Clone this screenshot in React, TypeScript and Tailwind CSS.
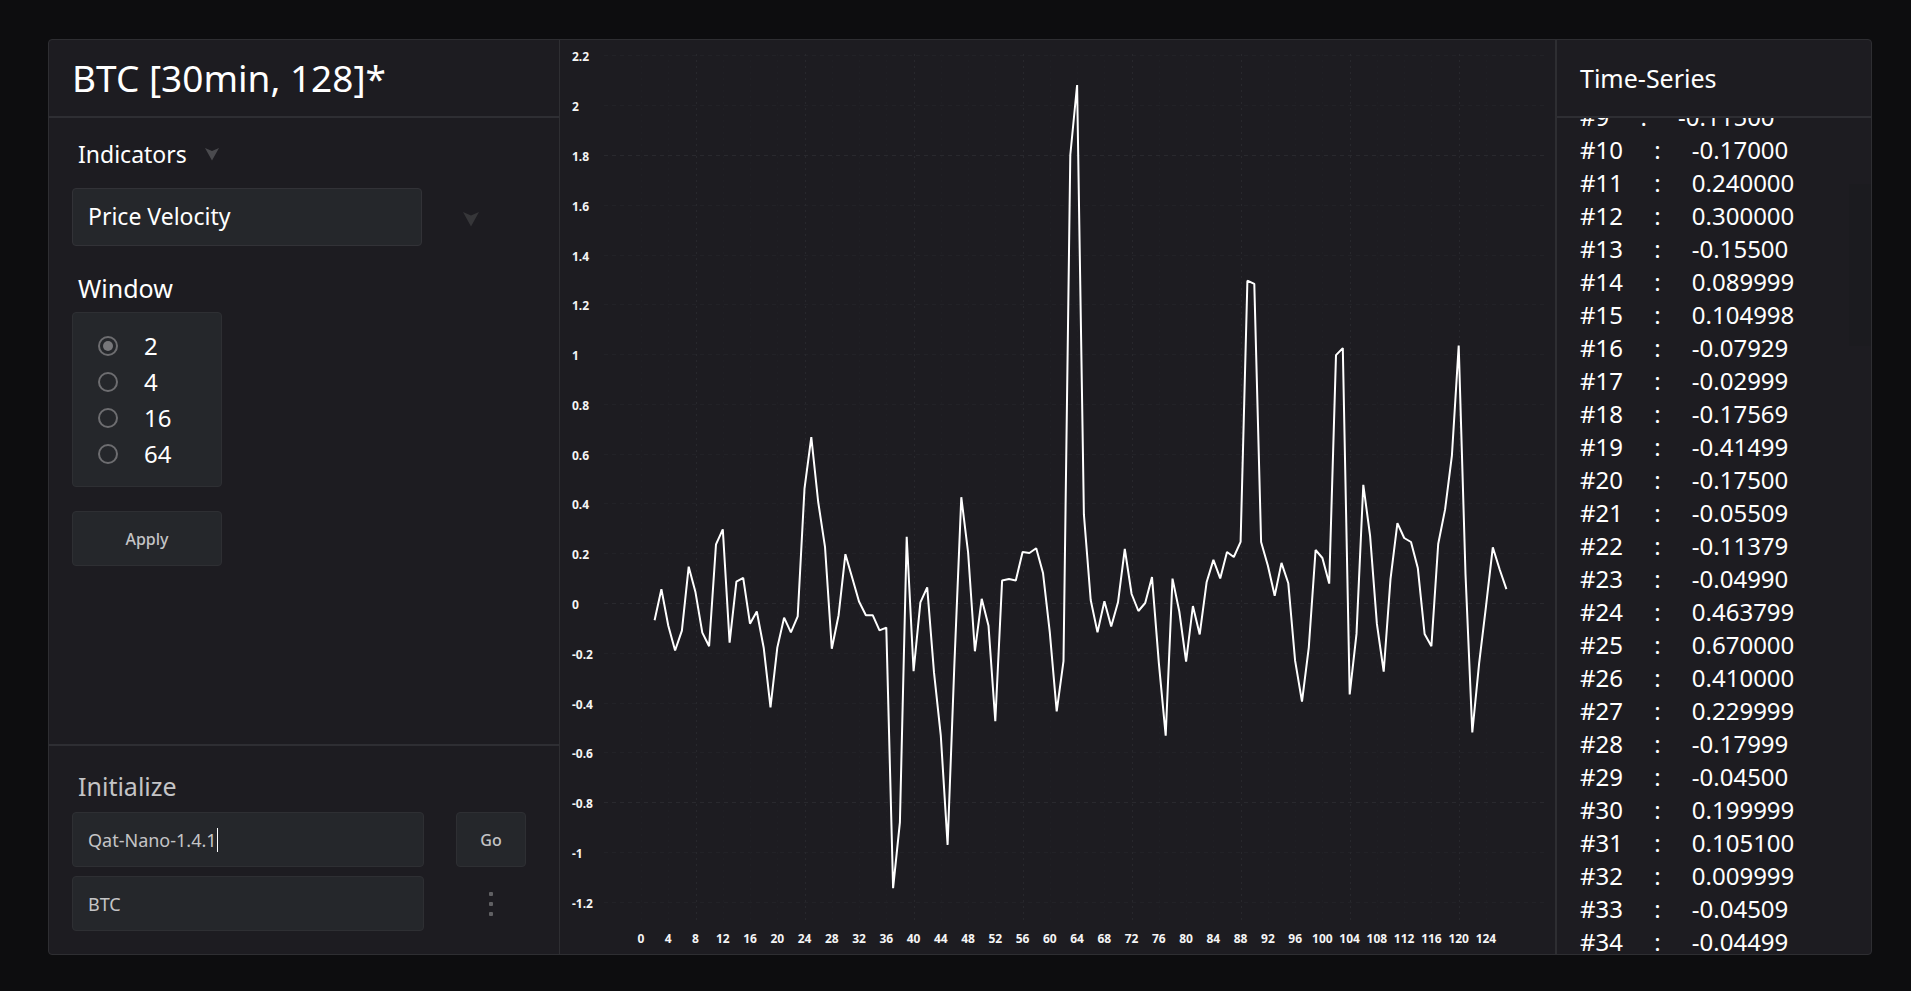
import { useState } from 'react';

// Price velocity per step, starting at #2
const FIRST = 2;
const SERIES = [
  -0.065, 0.06, -0.087, -0.187, -0.107, 0.15, 0.047, -0.115, -0.17, 0.24, 0.3, -0.155, 0.089999, 0.104998,
  -0.07929, -0.02999, -0.17569, -0.41499, -0.175, -0.05509, -0.11379, -0.0499, 0.463799, 0.67, 0.41,
  0.229999, -0.17999, -0.045, 0.199999, 0.1051, 0.009999, -0.04509, -0.04499, -0.106, -0.095, -1.142,
  -0.877, 0.27, -0.27, 0.007, 0.067, -0.275, -0.529, -0.968, -0.24, 0.429, 0.207, -0.19, 0.021, -0.087,
  -0.471, 0.094, 0.1, 0.095, 0.209, 0.205, 0.224, 0.125, -0.114, -0.431, -0.23, 1.804, 2.085, 0.36, 0.016,
  -0.114, 0.011, -0.09, 0.007, 0.221, 0.04, -0.028, 0.004, 0.108, -0.24, -0.529, 0.102, -0.03, -0.232,
  -0.008, -0.122, 0.087, 0.177, 0.103, 0.209, 0.189, 0.25, 1.299, 1.286, 0.249, 0.154, 0.033, 0.165, 0.083,
  -0.228, -0.392, -0.174, 0.217, 0.185, 0.082, 1, 1.028, -0.363, -0.12, 0.479, 0.274, -0.08, -0.272, 0.1,
  0.325, 0.265, 0.249, 0.145, -0.12, -0.17, 0.241, 0.38, 0.596, 1.038, 0.12, -0.516, -0.24, -0.013, 0.228,
  0.14, 0.06,
];

const WINDOWS = ['2', '4', '16', '64'];

const xAt = (i: number) => 81 + i * 6.814;
const yAt = (v: number) => 564 - v * 248.9;

const xTicks = Array.from({ length: 32 }, (_, i) => i * 4);
const yTicks = Array.from({ length: 18 }, (_, i) => (22 - i * 2) / 10);

function Chart() {
  const points = SERIES.map((v, i) => `${xAt(i + FIRST).toFixed(1)},${yAt(v).toFixed(1)}`).join(' ');

  return (
    <svg viewBox="0 0 995 914" className="h-full w-full" role="img" aria-label="Price Velocity">
      {yTicks.map((v) => (
        <line
          key={v}
          x1={44}
          x2={984}
          y1={Math.round(yAt(v)) - 0.5}
          y2={Math.round(yAt(v)) - 0.5}
          stroke={v === 1.8 || v === 0 || v === -0.8 ? '#29292e' : '#222227'}
          strokeDasharray="4 4"
        />
      ))}
      {xTicks.map((i) => (
        <line
          key={i}
          x1={Math.round(xAt(i)) + 0.5}
          x2={Math.round(xAt(i)) + 0.5}
          y1={14}
          y2={880}
          stroke={i % 16 === 8 ? '#28282d' : '#1f1f24'}
          strokeDasharray="2 4"
        />
      ))}
      <g fill="#f5f5f5" fontSize={12} fontWeight={700}>
        {yTicks.map((v) => (
          <text key={v} x={12} y={yAt(v) + 5}>
            {v}
          </text>
        ))}
        {xTicks.map((i) => (
          <text key={i} x={xAt(i)} y={903} textAnchor="middle">
            {i}
          </text>
        ))}
      </g>
      <polyline points={points} fill="none" stroke="#ffffff" strokeWidth={2} strokeLinejoin="bevel" />
    </svg>
  );
}

function Dart({ className }: { className: string }) {
  return (
    <svg viewBox="0 0 16 16" className={className} fill="currentColor" aria-hidden="true">
      <path d="M0 1L8 4.5L16 1L8 15.5Z" />
    </svg>
  );
}

export default function App() {
  const [size, setSize] = useState('2');
  const [model, setModel] = useState('Qat-Nano-1.4.1');
  const [symbol, setSymbol] = useState('BTC');

  const rows = SERIES.slice(9 - FIRST, 35 - FIRST);

  return (
    <main className="h-screen overflow-hidden bg-[#0d0d0f] pt-[39px] pr-[39px] pb-9 pl-12 font-['Noto_Sans',sans-serif] text-white">
      <div className="grid h-full grid-cols-[511px_minmax(0,1fr)_315px] rounded-sm border border-[#2e2e32] bg-[#1d1c21]">
        <div className="flex min-h-0 flex-col border-r border-[#2e2e32]">
          <header className="flex h-[78px] shrink-0 items-center border-b-2 border-[#2e2e33] px-[23px]">
            <h1 className="text-[37px] leading-10">BTC [30min, 128]*</h1>
          </header>

          <section className="flex flex-1 flex-col items-start px-[23px] pt-[18px]">
            <div className="flex items-center gap-[18px] pl-1.5 text-[#4a4a4e]">
              <h2 className="text-[23px] leading-9 text-white">Indicators</h2>
              <Dart className="h-3.5 w-3.5" />
            </div>
            <div className="mt-4 flex items-center text-[#363639]">
              <button
                type="button"
                className="h-[58px] w-[350px] rounded-sm border border-[#323237] bg-[#25272b] px-[15px] pb-0.5 text-left text-[23px] text-white"
              >
                Price Velocity
              </button>
              <button type="button" aria-label="More indicators" className="ml-[41px] pt-1">
                <Dart className="h-4 w-4" />
              </button>
            </div>

            <h2 className="mt-6 pl-1.5 text-[25px] leading-9">Window</h2>
            <div className="mt-1.5 flex h-[175px] w-[150px] flex-col justify-center rounded-sm border border-[#2e2f33] bg-[#25272b] pl-[25px]">
              {WINDOWS.map((w) => (
                <label key={w} className="flex h-9 items-center gap-[26px] text-2xl">
                  <input
                    type="radio"
                    name="window"
                    value={w}
                    checked={size === w}
                    onChange={() => setSize(w)}
                    className="h-5 w-5 appearance-none rounded-full border-2 border-[#6d6d70] bg-clip-content p-[3px] checked:bg-[#77777a]"
                  />
                  {w}
                </label>
              ))}
            </div>
            <button
              type="button"
              className="mt-6 h-[55px] w-[150px] rounded-sm border border-[#2e2f33] bg-[#25272b] text-base font-medium text-[#c4c4c6]"
            >
              Apply
            </button>
          </section>

          <section className="shrink-0 border-t-2 border-[#2e2e33] px-[23px] pt-[22px] pb-[23px] text-[#c4c4c6]">
            <h2 className="pl-1.5 text-[25px] leading-9">Initialize</h2>
            <div className="mt-2 flex gap-8">
              <div className="relative">
                <input
                  aria-label="Model"
                  value={model}
                  onChange={(e) => setModel(e.target.value)}
                  className="h-[55px] w-[352px] rounded-sm border border-[#2e2f33] bg-[#25272b] px-[15px] text-lg outline-none"
                />
                <span className="absolute top-4 left-[145px] h-6 w-px bg-white" />
              </div>
              <button
                type="button"
                className="h-[55px] w-[70px] rounded border border-[#2e2f33] bg-[#25272b] text-base font-medium"
              >
                Go
              </button>
            </div>
            <div className="mt-[9px] flex gap-8">
              <input
                aria-label="Symbol"
                value={symbol}
                onChange={(e) => setSymbol(e.target.value)}
                className="h-[55px] w-[352px] rounded-sm border border-[#2e2f33] bg-[#25272b] px-[15px] text-lg outline-none"
              />
              <button type="button" aria-label="Options" className="flex w-[70px] flex-col items-center justify-center gap-1.5">
                <span className="h-1 w-1 rounded-[1px] bg-[#606063]" />
                <span className="h-1 w-1 rounded-[1px] bg-[#606063]" />
                <span className="h-1 w-1 rounded-[1px] bg-[#606063]" />
              </button>
            </div>
          </section>
        </div>

        <div className="min-h-0 border-r border-[#2e2e32]">
          <Chart />
        </div>

        <div className="flex min-h-0 flex-col border-l border-[#2e2e32]">
          <header className="flex h-[78px] shrink-0 items-center border-b-2 border-[#2e2e33] px-[23px]">
            <h2 className="text-[25px] leading-9">Time-Series</h2>
          </header>
          <div className="relative min-h-0 flex-1 overflow-hidden">
            <ul className="-mt-[18px] px-[23px] text-2xl leading-[33px] whitespace-pre">
              {rows.map((v, i) => (
                <li key={i}>{`#${i + 9}     :     ${v.toFixed(6).slice(0, 8)}`}</li>
              ))}
            </ul>
            <div className="absolute top-[66px] right-0 h-[162px] w-[22px] bg-[#1b1b1f]" />
          </div>
        </div>
      </div>
    </main>
  );
}
